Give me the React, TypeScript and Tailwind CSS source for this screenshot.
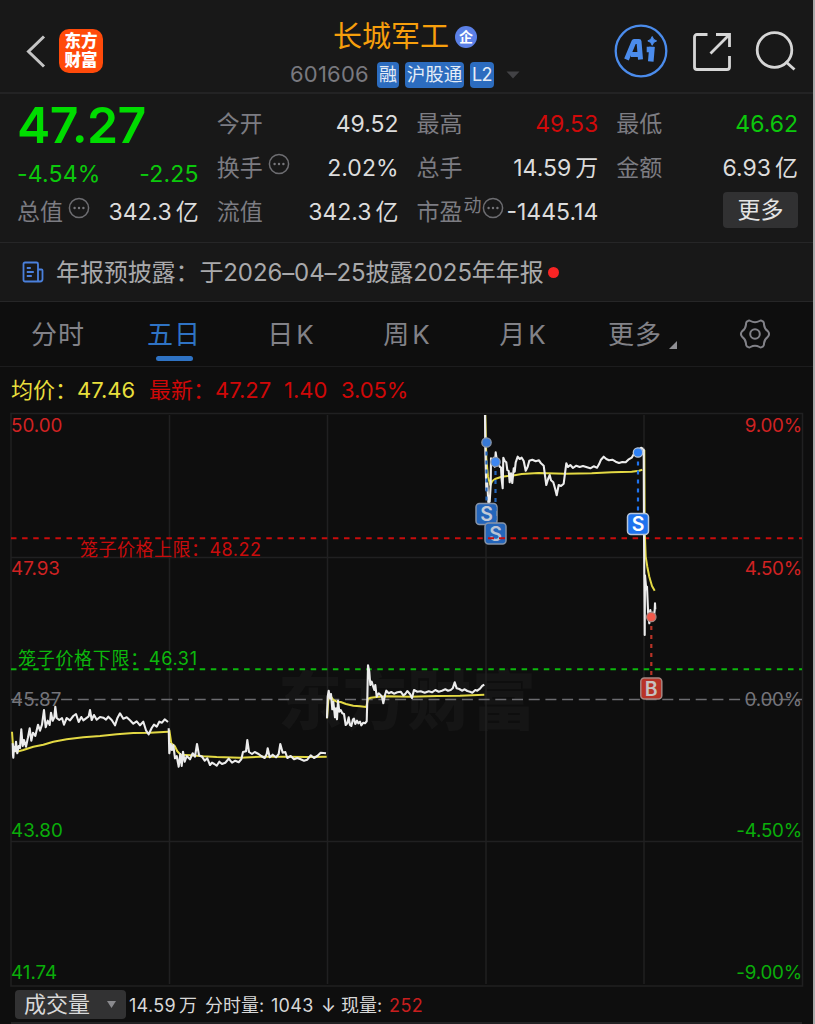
import React from "react";

// series are stored at 3x precision relative to an origin inside the chart
const toPoints = (data: number[][], ox: number, oy: number) =>
  data.map(([x, y]) => `${(ox + x / 3).toFixed(1)},${(oy + y / 3).toFixed(1)}`).join(" ");

const series = [
  {
    ox: 0,
    oy: 630,
    price: [
      [38, 340], [39, 375], [40, 383], [42, 350], [45, 364], [48, 335], [52, 370], [56, 348], [60, 354], [64, 298],
      [68, 348], [72, 330], [78, 350], [84, 322], [89, 295], [94, 332], [99, 308], [106, 318], [114, 284], [120, 302],
      [126, 284], [132, 240], [137, 292], [143, 272], [149, 285], [153, 248], [158, 272], [163, 262], [166, 230], [170, 264],
      [178, 270], [186, 264], [192, 284], [200, 264], [210, 271], [220, 258], [228, 252], [236, 276], [244, 261], [250, 271],
      [258, 265], [266, 259], [270, 240], [275, 270], [282, 255], [290, 269], [300, 261], [310, 263], [318, 269], [325, 260],
      [335, 270], [345, 286], [352, 265], [360, 250], [370, 266], [380, 262], [390, 271], [400, 281], [410, 274], [420, 286],
      [430, 275], [438, 301], [446, 313], [455, 294], [462, 284], [470, 290], [478, 275], [486, 278], [494, 268], [504, 276],
    ],
    avg: [[36, 305], [40, 360], [50, 365], [70, 360], [100, 350], [130, 344], [160, 335], [200, 328], [250, 322], [300, 318], [350, 313], [400, 309], [450, 308], [504, 305]],
  },
  {
    ox: 0,
    oy: 630,
    price: [
      [506, 295], [508, 370], [512, 342], [516, 360], [520, 345], [525, 385], [530, 378], [536, 410], [541, 372], [545, 408],
      [549, 365], [554, 395], [560, 378], [570, 388], [578, 370], [585, 380], [591, 342], [597, 376], [606, 380], [614, 392],
      [622, 385], [630, 405], [636, 398], [643, 402], [650, 407], [658, 395], [666, 402], [676, 398], [686, 386], [696, 398],
      [706, 392], [716, 397], [724, 388], [729, 366], [738, 364], [742, 330], [747, 366], [756, 372], [764, 366], [774, 371],
      [784, 378], [794, 384], [800, 372], [803, 355], [809, 382], [818, 374], [828, 382], [836, 372], [841, 342], [848, 368],
      [856, 366], [862, 384], [872, 378], [882, 388], [892, 384], [902, 388], [912, 392], [922, 389], [932, 376], [942, 384],
      [952, 378], [962, 368], [978, 370],
    ],
    avg: [[508, 300], [514, 340], [524, 348], [532, 364], [542, 374], [570, 376], [610, 379], [650, 381], [720, 383], [780, 380], [850, 380], [920, 381], [980, 380]],
  },
  {
    ox: 310,
    oy: 640,
    price: [
      [51, 235], [53, 170], [56, 152], [60, 175], [63, 162], [67, 208], [70, 185], [75, 232], [78, 205], [81, 238],
      [84, 182], [88, 215], [92, 210], [97, 220], [102, 222], [107, 255], [112, 250], [116, 232], [120, 255], [124, 258],
      [129, 238], [132, 236], [136, 252], [141, 242], [145, 250], [150, 245], [154, 256], [160, 248], [165, 250], [170, 244],
      [172, 180], [174, 76], [178, 95], [181, 135], [185, 125], [189, 138], [193, 150], [196, 135], [200, 170], [206, 160],
      [212, 166], [216, 170], [220, 190], [225, 165], [229, 152], [236, 160], [244, 156], [252, 161], [262, 157], [272, 155],
      [280, 166], [286, 162], [292, 153], [300, 162], [306, 174], [312, 150], [322, 155], [332, 154], [344, 158], [356, 154],
      [366, 157], [376, 150], [386, 155], [396, 152], [406, 148], [414, 152], [422, 150], [428, 145], [434, 127], [440, 145],
      [448, 147], [456, 152], [464, 148], [472, 153], [480, 155], [487, 158], [496, 150], [502, 152], [510, 146], [516, 138],
      [523, 134],
    ],
    avg: [[51, 235], [56, 165], [62, 168], [70, 180], [80, 185], [92, 186], [108, 192], [130, 197], [150, 199], [169, 201], [174, 176], [182, 173], [200, 171], [230, 169], [300, 170], [380, 168], [450, 167], [523, 164]],
  },
  {
    ox: 465,
    oy: 405,
    price: [
      [60, 30], [61, 130], [64, 255], [67, 235], [70, 292], [74, 290], [77, 240], [78, 160], [82, 180], [86, 158],
      [89, 185], [92, 142], [96, 170], [100, 175], [104, 185], [108, 188], [110, 225], [113, 250], [115, 158], [119, 168],
      [124, 172], [127, 195], [131, 198], [134, 232], [138, 205], [142, 234], [146, 190], [149, 200], [152, 172], [158, 155],
      [164, 162], [170, 158], [176, 168], [182, 197], [188, 185], [193, 167], [202, 164], [212, 169], [222, 166], [228, 175],
      [236, 182], [239, 205], [244, 240], [250, 220], [254, 210], [258, 226], [265, 232], [270, 250], [275, 271], [281, 240],
      [288, 243], [296, 236], [300, 205], [304, 175], [309, 186], [316, 180], [324, 189], [334, 182], [344, 186], [354, 183],
      [366, 187], [376, 190], [386, 184], [396, 188], [402, 178], [408, 164], [416, 155], [424, 162], [432, 166], [442, 164],
      [452, 170], [462, 174], [472, 171], [482, 172], [490, 164], [500, 158], [508, 145], [518, 136], [528, 128], [535, 132],
    ],
    avg: [[61, 30], [64, 160], [69, 215], [76, 240], [82, 228], [92, 221], [110, 215], [140, 212], [170, 207], [220, 204], [300, 206], [380, 205], [440, 202], [500, 200], [522, 197], [532, 194]],
  },
  {
    ox: 600,
    oy: 430,
    price: [
      [131, 56], [132, 300], [134, 615], [135, 436], [139, 478], [141, 470], [145, 560], [148, 580], [151, 540], [154, 560],
      [158, 548], [161, 565], [164, 540], [165, 520], [166, 538],
    ],
    avg: [[133, 60], [134, 300], [137, 380], [142, 410], [148, 440], [156, 468], [164, 482]],
  },
];

const axisLabels = [
  { y: 432, left: "50.00", right: "9.00%", fill: "#d02222" },
  { y: 574.5, left: "47.93", right: "4.50%", fill: "#d02222" },
  { y: 705.5, left: "45.87", right: "0.00%", fill: "#74747a" },
  { y: 836.5, left: "43.80", right: "-4.50%", fill: "#0aad0a" },
  { y: 979, left: "41.74", right: "-9.00%", fill: "#0aad0a" },
];

const markers = [
  { letter: "S", x: 486.5, dotY: 442.5, boxY: 514, fill: "#2465ba", text: "#c3cad6", stroke: "#8794a8", dot: "#3779d6" },
  { letter: "S", x: 495.5, dotY: 462, boxY: 533.5, fill: "#2465ba", text: "#b9c4d5", stroke: "#8794a8", dot: "#3d86f0" },
  { letter: "S", x: 638, dotY: 452.5, boxY: 524, fill: "#1f73ee", text: "#ffffff", stroke: "#b9c6d8", dot: "#2d80f5" },
  { letter: "B", x: 651.3, dotY: 617, boxY: 688.5, fill: "#b83327", text: "#c7c2c0", stroke: "#a58581", dot: "#f2594b" },
];

const tabs = [
  { label: "分时", width: "w-[116px]" },
  { label: "五日", width: "w-[116px]", active: true },
  { label: "日K", width: "w-[118px]" },
  { label: "周K", width: "w-[114px]" },
  { label: "月K", width: "w-[118px]" },
];

const MoreInfo = ({ className = "" }: { className?: string }) => (
  <svg className={`h-[22px] w-[22px] shrink-0 ${className}`} viewBox="0 0 22 22" fill="none">
    <circle cx="11" cy="11" r="9.6" stroke="#6d6d71" strokeWidth="1.5" />
    <circle cx="6.6" cy="11" r="1.2" fill="#77777b" />
    <circle cx="11" cy="11" r="1.2" fill="#77777b" />
    <circle cx="15.4" cy="11" r="1.2" fill="#77777b" />
  </svg>
);

const Cell = ({ label, value, unit, color = "text-[#dcdcdc]", children }: {
  label: string;
  value: string;
  unit?: string;
  color?: string;
  children?: React.ReactNode;
}) => (
  <div className="flex h-11 items-center whitespace-nowrap">
    <span className="text-[23px] text-[#7c7c82]">{label}</span>
    {children}
    <span className={`ml-auto text-[23px] ${color}`}>
      {value}
      {unit && <span className="ml-1">{unit}</span>}
    </span>
  </div>
);

const Header = () => (
  <header className="flex h-[94px] items-start border-b-2 border-[#232324]">
    <svg className="ml-6 mt-[34px] h-9 w-6" viewBox="0 0 24 36" fill="none">
      <path d="M20 2.5 4.5 17.5 20 32.5" stroke="#c4c4c4" strokeWidth="3" />
    </svg>
    <div className="ml-[11px] mt-[28.5px] flex h-11 w-11 flex-col items-center justify-center rounded-[10px] bg-[#ff4a0a] text-[16.5px] font-black leading-[18.5px] text-white">
      <span>东方</span>
      <span>财富</span>
    </div>
    <div className="ml-[187px] mt-[19px] w-[236px]">
      <div className="flex h-9 items-center pl-[43px]">
        <span className="text-[29px] leading-9 text-[#f79f0c]">长城军工</span>
        <span className="ml-[6px] flex h-[22px] w-[22px] items-center justify-center rounded-full bg-[#5b80e6] text-[14px] font-bold leading-none text-white">企</span>
      </div>
      <div className="mt-[6px] flex h-[27px] items-center whitespace-nowrap">
        <span className="w-[87px] text-[22px] tracking-[0.2px] text-[#79797f]">601606</span>
        <span className="flex h-[26px] w-[22px] items-center justify-center rounded bg-[#2c6cbf] text-[18px] text-[#e4ecf7]">融</span>
        <span className="ml-[6px] flex h-[26px] w-[59px] items-center justify-center rounded bg-[#2c6cbf] text-[18.5px] text-[#e4ecf7]">沪股通</span>
        <span className="ml-[6px] flex h-[26px] w-6 items-center justify-center rounded bg-[#2c6cbf] text-[18px] tracking-[-0.5px] text-[#e4ecf7]">L2</span>
        <svg className="ml-3 h-2 w-[14px]" viewBox="0 0 14 8">
          <path d="M0.5 0.5h13L7 7.5z" fill="#424245" />
        </svg>
      </div>
    </div>
    <svg className="ml-[88px] mt-[24px] h-[54px] w-[54px]" viewBox="0 0 54 54" fill="none">
      <circle cx="27" cy="27" r="25.3" stroke="#4b8cec" strokeWidth="2.3" />
      <path d="M12.500 35.500 20 17.500h5L26.500 35.500M17 30.500h8" stroke="#4b8cec" strokeWidth="5" strokeLinejoin="round" />
      <path d="M37.800 25.500 37 34.700M35.500 25.500h2" stroke="#4b8cec" strokeWidth="5.600" strokeLinecap="square" />
      <path d="m38.200 12.500 1.500 2.900 2.900 1.500-2.900 1.500-1.500 2.900-1.500-2.900-2.900-1.500 2.900-1.500z" fill="#4b8cec" stroke="#4b8cec" />
    </svg>
    <svg className="ml-6 mt-8 h-10 w-10" viewBox="0 0 40 40" fill="none" stroke="#d6d6d6" strokeWidth="2.8">
      <path d="M15.500 2.500H5A2.500 2.500 0 0 0 2.500 5v30A2.500 2.500 0 0 0 5 37.500h30a2.500 2.500 0 0 0 2.500-2.500V24" />
      <path d="M24 2.500h13.500V15M37 3 18.500 21.500" />
    </svg>
    <svg className="ml-[22px] mt-[30px] h-11 w-11" viewBox="0 0 44 44" fill="none" stroke="#d6d6d6" strokeWidth="2.8">
      <circle cx="20.500" cy="20" r="17.300" />
      <path d="m31.500 31.500 9 8" />
    </svg>
  </header>
);

const Quote = () => (
  <section className="grid h-[148px] grid-cols-4 gap-x-[18px] pl-[17px] pr-[15px] pt-2">
    <div>
      <div className="flex h-[50px] items-center text-[50px] font-semibold leading-none tracking-[-0.6px] text-[#00dc00]">
        <span className="-mt-1">47.27</span>
      </div>
      <div className="flex h-[38px] items-center justify-between pt-[7px] text-[23px] text-[#0cc80c]">
        <span className="tracking-[0.2px]">-4.54%</span>
        <span className="tracking-[0.2px]">-2.25</span>
      </div>
      <Cell label="总值" value="342.3" unit="亿">
        <MoreInfo className="mb-[9px] ml-[5px]" />
      </Cell>
    </div>
    <div>
      <Cell label="今开" value="49.52" />
      <Cell label="换手" value="2.02%">
        <MoreInfo className="mb-[9px] ml-[5px]" />
      </Cell>
      <Cell label="流值" value="342.3" unit="亿" />
    </div>
    <div>
      <Cell label="最高" value="49.53" color="text-[#d00a0a]" />
      <Cell label="总手" value="14.59" unit="万" />
      <Cell label="市盈" value="-1445.14">
        <span className="mb-[14px] ml-px text-[18px] text-[#7c7c82]">动</span>
        <MoreInfo className="mb-[9px]" />
      </Cell>
    </div>
    <div>
      <Cell label="最低" value="46.62" color="text-[#0cc80c]" />
      <Cell label="金额" value="6.93" unit="亿" />
      <button className="ml-auto mt-[2px] flex h-9 w-[75px] items-center justify-center rounded bg-[#313132] text-[23px] text-[#e4e4e4]">更多</button>
    </div>
  </section>
);

const Notice = () => (
  <div className="flex h-[60px] items-center border-y border-[#262627] pl-[22px]">
    <svg className="h-[22px] w-[22px]" viewBox="0 0 22 22" fill="none" stroke="#4a80dc" strokeWidth="1.8">
      <path d="M16 20.500H3a1.500 1.500 0 0 1-1.500-1.500V3A1.500 1.500 0 0 1 3 1.500h11.500A1.500 1.500 0 0 1 16 3zM16 8.500h3.500a1 1 0 0 1 1 1V18a2.500 2.500 0 0 1-2.500 2.500h-2" />
      <path d="M4.800 7h4M4.800 11h7M4.800 15h5" />
    </svg>
    <span className="ml-3 mt-0.5 whitespace-nowrap text-[24px] tracking-[-0.1px] text-[#a9a9ab]">年报预披露：于2026–04–25披露2025年年报</span>
    <span className="ml-[4px] h-[11px] w-[11px] rounded-full bg-[#f82424]" />
  </div>
);

const Tabs = () => (
  <nav className="flex h-[65px] items-start border-b border-[#1c1c1d] bg-[#0e0e0e] text-[26px] text-[#828288]">
    {tabs.map((tab) => (
      <div key={tab.label} className={`flex flex-col items-center pt-[15px] ${tab.width}`}>
        <span className={`leading-9 tracking-[1px] ${tab.active ? "text-[#2f73c4]" : ""}`}>
          {tab.label[0]}
          <span className={tab.active || tab.label === "分时" ? "" : "ml-0.5"}>{tab.label[1]}</span>
        </span>
        {tab.active && <span className="mt-[3px] h-[5px] w-[37px] rounded-full bg-[#2f73c4]" />}
      </div>
    ))}
    <div className="ml-[26px] flex items-end pt-[15px]">
      <span className="leading-9 tracking-[1px]">更多</span>
      <svg className="mb-1 ml-[7px] h-2 w-2" viewBox="0 0 8 8">
        <path d="M8 0v8H0z" fill="#8f8f93" />
      </svg>
    </div>
    <svg className="ml-[62px] mt-4 h-8 w-8" viewBox="0 0 32 32" fill="none" stroke="#828288" strokeWidth="2">
      <path d="M8.500 3.200Q10 2.100 11.500 3 Q16 5.600 20.500 3 Q22 2.100 23.500 3.200 Q25.300 4.400 25 6.600 Q25.500 11 28.800 13.200 Q31.300 16 28.800 18.800 Q25.500 21 25 25.400 Q25.300 27.600 23.500 28.800 Q22 29.900 20.500 29 Q16 26.400 11.500 29 Q10 29.900 8.500 28.800 Q6.700 27.600 7 25.400 Q6.500 21 3.200 18.800 Q0.700 16 3.200 13.200 Q6.500 11 7 6.600 Q6.700 4.400 8.500 3.200z" />
      <circle cx="16" cy="16" r="4.800" />
    </svg>
  </nav>
);

const Legend = () => (
  <div className="flex h-[45px] items-center whitespace-pre pl-[11px] pt-px text-[22px]">
    <span className="w-[138px] text-[#e8df3c]">均价：47.46</span>
    <span className="w-[135px] text-[#cf0808]">最新：47.27</span>
    <span className="w-[57px] text-[#cf0808]">1.40</span>
    <span className="tracking-[-0.1px] text-[#cf0808]">3.05%</span>
  </div>
);

const Chart = () => (
  <svg className="block h-[576px] w-[813px]" viewBox="0 412 813 576" fontSize="18.8">
    <text x="407" y="724" textAnchor="middle" fontSize="64" fontWeight="900" fill="#151515" textLength="258">东方财富</text>
    <g stroke="#202021" strokeWidth="1.500" fill="none">
      <path d="M11 413.500H802.500V986H11z" />
      <path d="M169.500 415V984M327.500 415V984M486 415V984M644 415V984M11 557.500H802M11 841.500H802" />
    </g>
    <path d="M11 699.500H802" stroke="#6c6c70" strokeWidth="1.300" strokeDasharray="11 5.700" />
    <path d="M11 538.300H802" stroke="#c80c0c" strokeWidth="2" strokeDasharray="5.500 5.600" />
    <path d="M11 669.300H802" stroke="#0cb80c" strokeWidth="2" strokeDasharray="5.500 5.600" />
    {axisLabels.map((label) => (
      <g key={label.left} fill={label.fill}>
        <text x="11" y={label.y}>{label.left}</text>
        <text x="802" y={label.y} textAnchor="end" letterSpacing="-0.2">{label.right}</text>
      </g>
    ))}
    <text x="80" y="556" fontSize="18" fill="#c80c0c" textLength="181">笼子价格上限：48.22</text>
    <text x="18" y="665" fontSize="18" fill="#0cb80c" textLength="179">笼子价格下限：46.31</text>
    {series.map((day, i) => (
      <g key={i} fill="none" strokeLinejoin="round">
        <polyline points={toPoints(day.avg, day.ox, day.oy)} stroke="#e3d944" strokeWidth="2" />
        <polyline points={toPoints(day.price, day.ox, day.oy)} stroke="#ececec" strokeWidth="2.100" />
      </g>
    ))}
    {markers.map((m) => (
      <g key={`${m.letter}${m.x}`}>
        <path d={`M${m.x} ${m.dotY}V${m.boxY - 11}`} stroke={m.fill} strokeWidth="2.200" strokeDasharray="4 5" />
        <circle cx={m.x} cy={m.dotY} r="4.700" fill={m.dot} stroke={m.stroke} strokeWidth="1.300" />
        <rect x={m.x - 10.500} y={m.boxY - 10.500} width="21" height="21" rx="3.500" fill={m.fill} stroke={m.stroke} strokeWidth="1.500" />
        <text x={m.x} y={m.boxY + 7} textAnchor="middle" fontSize="19.500" fontWeight="600" fill={m.text}>{m.letter}</text>
      </g>
    ))}
    <path d="M488 538.300H494M499 538.300H505" stroke="#c80c0c" strokeWidth="2" />
  </svg>
);

const Volume = () => (
  <footer className="flex h-[34px] items-start whitespace-nowrap pl-[15px] pt-[2px] text-[18px] text-[#d8d8d8]">
    <div className="flex h-[29px] w-[111px] items-center rounded bg-[#323233] pl-[9px]">
      <span className="text-[22px] leading-[31px]">成交量</span>
      <svg className="ml-[17px] h-[7px] w-[9px]" viewBox="0 0 9 7">
        <path d="M0 0h9L4.500 7z" fill="#8a8a8e" />
      </svg>
    </div>
    <div className="flex pl-[3px] leading-[31px]">
      <span className="w-[76px] tracking-[0.3px]">14.59<span className="ml-[3px]">万</span></span>
      <span className="w-[66px]">分时量:</span>
      <span className="w-[50px] tracking-[0.3px]">1043</span>
      <span className="w-5">↓</span>
      <span className="w-[48px]">现量:</span>
      <span className="tracking-[0.4px] text-[#c81e1e]">252</span>
    </div>
  </footer>
);

export default function App() {
  return (
    <div className="h-[1024px] w-[815px] overflow-hidden border-r-2 border-[#a9a9a9] bg-[#181818] font-['Inter','Noto_Sans_CJK_SC',sans-serif]">
      <Header />
      <Quote />
      <Notice />
      <Tabs />
      <div className="bg-[#0e0e0e]">
        <Legend />
        <Chart />
        <Volume />
        <div className="ml-[11px] h-3 w-[791px] border-t-2 border-[#222223]" />
      </div>
    </div>
  );
}
